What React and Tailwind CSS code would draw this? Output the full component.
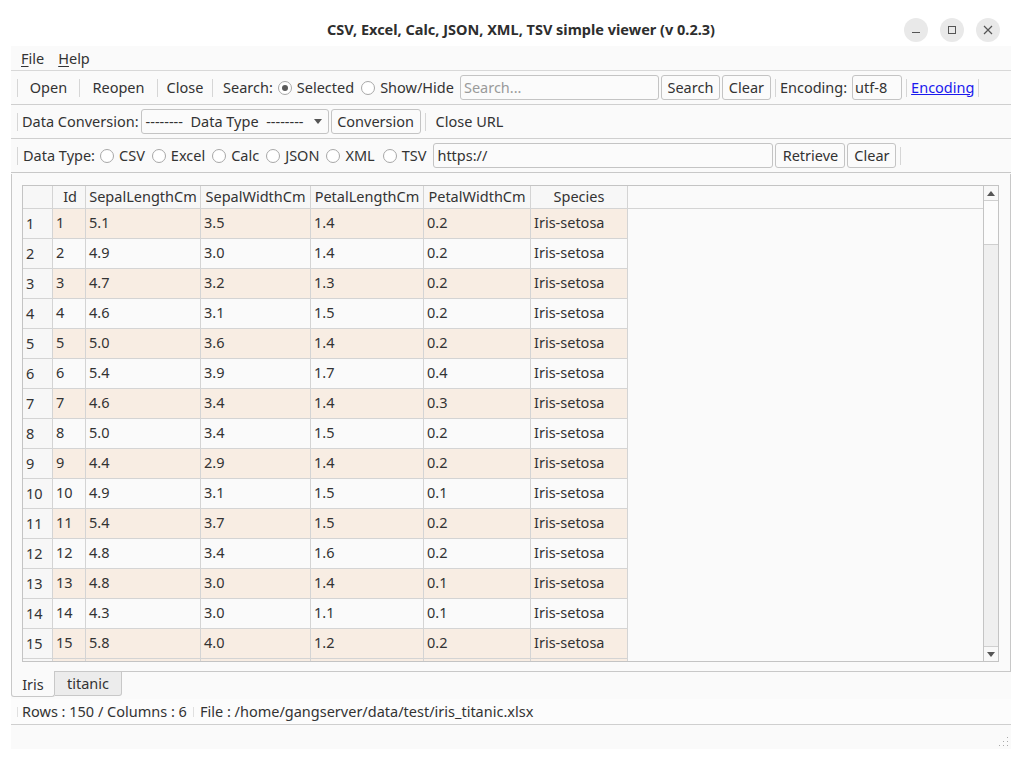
import React from "react";

const rows = [
  [1, "5.1", "3.5", "1.4", "0.2"],
  [2, "4.9", "3.0", "1.4", "0.2"],
  [3, "4.7", "3.2", "1.3", "0.2"],
  [4, "4.6", "3.1", "1.5", "0.2"],
  [5, "5.0", "3.6", "1.4", "0.2"],
  [6, "5.4", "3.9", "1.7", "0.4"],
  [7, "4.6", "3.4", "1.4", "0.3"],
  [8, "5.0", "3.4", "1.5", "0.2"],
  [9, "4.4", "2.9", "1.4", "0.2"],
  [10, "4.9", "3.1", "1.5", "0.1"],
  [11, "5.4", "3.7", "1.5", "0.2"],
  [12, "4.8", "3.4", "1.6", "0.2"],
  [13, "4.8", "3.0", "1.4", "0.1"],
  [14, "4.3", "3.0", "1.1", "0.1"],
  [15, "5.8", "4.0", "1.2", "0.2"],
];

const cols = [
  { name: "Id", w: "w-[33px]" },
  { name: "SepalLengthCm", w: "w-[115px]" },
  { name: "SepalWidthCm", w: "w-[110px]" },
  { name: "PetalLengthCm", w: "w-[113px]" },
  { name: "PetalWidthCm", w: "w-[107px]" },
  { name: "Species", w: "w-[97px]" },
];

function Sep({ cls = "" }) {
  return <div className={`w-px h-[18px] bg-[#d6d6d6] shrink-0 ${cls}`} />;
}

function Radio({ checked }) {
  return (
    <span className="inline-flex items-center justify-center w-[14px] h-[14px] rounded-full border border-[#a8a8a8] bg-white mx-[5px] shrink-0">
      {checked && <span className="w-[6px] h-[6px] rounded-full bg-[#5a5a5a]" />}
    </span>
  );
}

function Btn({ children, w }) {
  return (
    <div className={`h-[25px] ${w} shrink-0 flex items-center justify-center border border-[#c4c4c4] rounded-[3px] bg-[#fbfbfb]`}>
      {children}
    </div>
  );
}

export default function App() {
  return (
    <div
      className="w-[1022px] h-[760px] bg-white text-[#333333] text-[14.5px] overflow-hidden"
      style={{ fontFamily: '"Noto Sans", "Open Sans", sans-serif' }}
    >
      {/* Title bar */}
      <div className="h-[46px] flex items-center relative">
        <div className="w-full text-center font-bold text-[14.5px] pt-[14px] pl-[20px] text-[#2e2e2e]">
          CSV, Excel, Calc, JSON, XML, TSV simple viewer (v 0.2.3)
        </div>
        <div className="absolute right-[22px] top-[18px] flex gap-[12px]">
          <div className="w-[24px] h-[24px] rounded-full bg-[#e9e9e9] flex items-center justify-center">
            <div className="w-[8px] h-px bg-[#555] mt-[4px]" />
          </div>
          <div className="w-[24px] h-[24px] rounded-full bg-[#e9e9e9] flex items-center justify-center">
            <div className="w-[8px] h-[8px] border border-[#555]" />
          </div>
          <div className="w-[24px] h-[24px] rounded-full bg-[#e9e9e9] flex items-center justify-center text-[#555]">
            <svg width="10" height="10" viewBox="0 0 10 10"><path d="M1 1L9 9M9 1L1 9" stroke="#555" strokeWidth="1.2" /></svg>
          </div>
        </div>
      </div>

      {/* Window body */}
      <div className="ml-[11px] w-[1000px] bg-[#fafafa]">
        {/* Menu */}
        <div className="h-[25px] flex items-center gap-[14px] pl-[10px] pt-[2px] border-b border-[#d8d8d8]">
          <span><span className="underline underline-offset-2">F</span>ile</span>
          <span><span className="underline underline-offset-2">H</span>elp</span>
        </div>

        {/* Toolbar 1 */}
        <div className="h-[34px] flex items-center pl-[6px] border-b border-[#cfcfcf] whitespace-nowrap">
          <Sep />
          <div className="w-[61px] text-center shrink-0">Open</div>
          <Sep />
          <div className="w-[77px] text-center shrink-0">Reopen</div>
          <Sep />
          <div className="w-[54px] text-center shrink-0">Close</div>
          <Sep />
          <span className="ml-[10px]">Search:</span>
          <Radio checked />
          <span className="mr-[2px]">Selected</span>
          <Radio />
          <span className="mr-[6px]">Show/Hide</span>
          <div className="h-[25px] w-[199px] shrink-0 border border-[#c4c4c4] rounded-[3px] bg-[#fbfbfb] flex items-center pl-[3px] text-[#9a9a9a]">Search...</div>
          <div className="w-[2px] shrink-0" />
          <Btn w="w-[59px]">Search</Btn>
          <div className="w-[2px] shrink-0" />
          <Btn w="w-[49px]">Clear</Btn>
          <Sep cls="mx-[4px]" />
          <span className="mr-[5px]">Encoding:</span>
          <div className="h-[25px] w-[50px] shrink-0 border border-[#c4c4c4] rounded-[3px] bg-[#fbfbfb] flex items-center pl-[2px]">utf-8</div>
          <Sep cls="mx-[4px]" />
          <span className="text-[#1a1aee] underline">Encoding</span>
          <Sep cls="ml-[4px]" />
        </div>

        {/* Toolbar 2 */}
        <div className="h-[34px] flex items-center pl-[6px] border-b border-[#cfcfcf] whitespace-nowrap">
          <Sep cls="mr-[4px]" />
          <span className="mr-[2px]">Data Conversion:</span>
          <div className="h-[25px] w-[188px] shrink-0 border border-[#c4c4c4] rounded-[3px] bg-[#fbfbfb] flex items-center pl-[4px] pr-[6px] justify-between">
            <span>-------- &nbsp;Data Type &nbsp;--------</span>
            <svg width="8" height="5" viewBox="0 0 8 5"><path d="M0 0H8L4 5Z" fill="#555" /></svg>
          </div>
          <div className="w-[2px] shrink-0" />
          <Btn w="w-[90px]">Conversion</Btn>
          <Sep cls="mx-[4px]" />
          <span className="ml-[6px]">Close URL</span>
        </div>

        {/* Toolbar 3 */}
        <div className="h-[34px] flex items-center pl-[6px] border-b border-[#c8c8c8] whitespace-nowrap">
          <Sep cls="mr-[5px]" />
          <span>Data Type:</span>
          <Radio /><span className="mr-[2px]">CSV</span>
          <Radio /><span className="mr-[2px]">Excel</span>
          <Radio /><span className="mr-[2px]">Calc</span>
          <Radio /><span className="mr-[2px]">JSON</span>
          <Radio /><span className="mr-[3px]">XML</span>
          <Radio /><span className="mr-[7px]">TSV</span>
          <div className="h-[25px] w-[340px] shrink-0 border border-[#c4c4c4] rounded-[3px] bg-[#fbfbfb] flex items-center pl-[3px]">https://</div>
          <div className="w-[2px] shrink-0" />
          <Btn w="w-[70px]">Retrieve</Btn>
          <div className="w-[2px] shrink-0" />
          <Btn w="w-[49px]">Clear</Btn>
          <Sep cls="ml-[4px]" />
        </div>

        {/* Tab pane */}
        <div className="border border-[#c8c8c8] border-t-0 mt-px bg-[#fafafa] h-[498px] pt-[11px] pl-[10px] pr-[11px] pb-[9px]">
          <div className="h-[477px] border border-[#c4c4c4] flex bg-[#fafafa] overflow-hidden">
            <div className="flex-1 overflow-hidden">
              {/* header */}
              <div className="flex h-[23px] border-b border-[#d4d4d4]">
                <div className="w-[30px] border-r border-[#d4d4d4] bg-[#f7f7f7]" />
                {cols.map((c) => (
                  <div key={c.name} className={`${c.w} border-r border-[#d4d4d4] flex items-center justify-center bg-[#f7f7f7] leading-none pb-[2px]`}>
                    {c.name === "Id" ? <span className="w-full text-right pr-[8px]">Id</span> : c.name}
                  </div>
                ))}
              </div>
              {rows.map((r, i) => {
                const odd = i % 2 === 0;
                const bg = odd ? "bg-[#f8ede3]" : "bg-[#fafafa]";
                const vals = [String(r[0]), r[1], r[2], r[3], r[4], "Iris-setosa"];
                return (
                  <div key={i} className="flex h-[30px]">
                    <div className="w-[30px] border-r border-b border-[#d4d4d4] bg-[#f7f7f7] flex items-center pl-[3px] pt-[1px]">{r[0]}</div>
                    {vals.map((v, j) => (
                      <div key={j} className={`${cols[j].w} ${bg} border-r border-b border-[#d4d4d4] flex items-center pl-[3px] pb-[2px]`}>
                        {v}
                      </div>
                    ))}
                  </div>
                );
              })}
              <div className="flex h-[3px]">
                <div className="w-[30px] border-r border-[#d4d4d4] bg-[#f7f7f7]" />
                {cols.map((c) => (
                  <div key={c.name} className={`${c.w} border-r border-[#d4d4d4] bg-[#f8ede3]`} />
                ))}
              </div>
            </div>
            {/* scrollbar */}
            <div className="w-[15px] border-l border-[#c4c4c4] flex flex-col bg-[#efefef]">
              <div className="h-[15px] flex items-center justify-center bg-[#f8f8f8] border-b border-[#cfcfcf]">
                <svg width="8" height="5" viewBox="0 0 8 5"><path d="M0 5H8L4 0Z" fill="#555" /></svg>
              </div>
              <div className="h-[44px] bg-[#fcfcfc] border-b border-[#cfcfcf]" />
              <div className="flex-1" />
              <div className="h-[15px] flex items-center justify-center bg-[#f8f8f8] border-t border-[#cfcfcf]">
                <svg width="8" height="5" viewBox="0 0 8 5"><path d="M0 0H8L4 5Z" fill="#555" /></svg>
              </div>
            </div>
          </div>
        </div>

        {/* Tabs */}
        <div className="flex h-[26px] -mt-px">
          <div className="w-[44px] h-[26px] border border-[#c8c8c8] border-t-0 rounded-b-[3px] bg-[#fafafa] flex items-center justify-center pt-[2px]">Iris</div>
          <div className="w-[67px] h-[25px] border border-[#c8c8c8] border-l-0 rounded-br-[3px] bg-[#ececec] flex items-center justify-center">titanic</div>
        </div>

        {/* Status bar */}
        <div className="h-[26px] mt-[2px] flex items-center pl-[6px] border-b border-[#cfcfcf] bg-[#fcfcfc] whitespace-nowrap">
          <div className="w-px h-[10px] bg-[#e0e0e0] mr-[4px]" />
          <span>Rows : 150 / Columns : 6</span>
          <div className="w-px h-[10px] bg-[#e0e0e0] mx-[6px]" />
          <span>File : /home/gangserver/data/test/iris_titanic.xlsx</span>
        </div>
        <div className="h-[24px] relative">
          <svg className="absolute right-[2px] bottom-[2px]" width="12" height="12" viewBox="0 0 12 12">
            {[[10,2],[10,6],[6,6],[10,10],[6,10],[2,10]].map(([x,y],k)=>(<rect key={k} x={x} y={y} width="1" height="1" fill="#aaa" />))}
          </svg>
        </div>
      </div>
    </div>
  );
}
